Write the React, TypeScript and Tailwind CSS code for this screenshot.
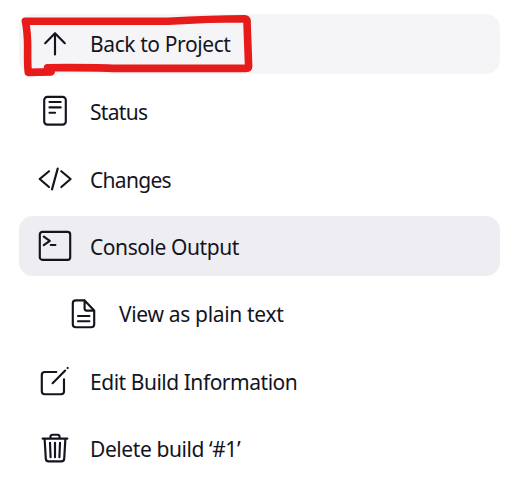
import type { ReactNode } from "react";

type Item = {
  label: string;
  icon: ReactNode;
  row?: string;
  text: string;
};

const items: Item[] = [
  {
    label: "Back to Project",
    row: "bg-[#f5f5f8] pl-[18px]",
    text: "tracking-[-0.4px] pt-px",
    icon: <path d="M18 28.5V7.2M8.2 17.2 18 7.2l9.8 10" />,
  },
  {
    label: "Status",
    text: "tracking-[-0.7px] pt-[2px]",
    icon: (
      <>
        <rect x="7.2" y="3.8" width="21.6" height="27.8" rx="3.2" />
        <path d="M12.5 9h11.2M12.5 14.4h11.2M12.5 19.7h5.6" />
      </>
    ),
  },
  {
    label: "Changes",
    text: "tracking-[-0.7px] pt-[3px]",
    icon: <path d="M12 10.2 2.7 18l9.3 8M24.3 10.2l9.3 7.8-9.3 8M20.7 7.6 15 28.4" />,
  },
  {
    label: "Console Output",
    row: "bg-[#eeedf2] pl-[18px]",
    text: "tracking-[-0.43px] pt-[2px]",
    icon: (
      <>
        <rect x="2.8" y="3.8" width="30.4" height="28" rx="2.6" />
        <path d="m6.8 8.6 6 4.2-6 4.4M13.8 17h4.6" />
      </>
    ),
  },
  {
    label: "View as plain text",
    row: "pl-[47px]",
    text: "tracking-[-0.33px] pt-[2px]",
    icon: (
      <>
        <path d="M18.6 4.4H9.8a3 3 0 0 0-3 3v20.8a3 3 0 0 0 3 3h15.4a3 3 0 0 0 3-3V14.4L18.6 4.4v8.2a2 2 0 0 0 2 2h7.4" />
        <path d="M12 20h11.4M12 25.2h11.4" />
      </>
    ),
  },
  {
    label: "Edit Build Information",
    text: "tracking-[-0.47px] pt-[3px]",
    icon: (
      <>
        <path d="M19.3 9H7.8a3 3 0 0 0-3 3v16.2a3 3 0 0 0 3 3H24a3 3 0 0 0 3-3V16.2" />
        <path d="M15.6 20.2 28.2 7.6M30.6 5.1l.1-.1" />
      </>
    ),
  },
  {
    label: "Delete build ‘#1’",
    text: "tracking-[-0.42px] pt-[2px]",
    icon: (
      <>
        <path d="M5.6 8.6h24.8M13.4 8.6V6.9a2.2 2.2 0 0 1 2.2-2.2h4.8a2.2 2.2 0 0 1 2.2 2.2v1.7M7.6 8.6l1.2 20a2.8 2.8 0 0 0 2.8 2.7h12.8a2.8 2.8 0 0 0 2.8-2.7l1.2-20" />
        <path d="m13 12.8.6 14.4M18 12.8v14.4M23 12.8l-.6 14.4" />
      </>
    ),
  },
];

export default function App() {
  return (
    <main className="relative h-[490px] w-[523px] overflow-hidden bg-white pl-[19px] pt-[14px] font-['Noto_Sans','Open_Sans',sans-serif] text-[#14141f]">
      <nav className="flex w-[481px] flex-col gap-[7.4px]">
        {items.map((item) => (
          <a
            key={item.label}
            className={`flex h-[60px] shrink-0 items-center gap-[17px] rounded-[14px] ${item.row ?? "pl-[18px]"}`}
          >
            <svg
              className="size-9 shrink-0"
              viewBox="0 0 36 36"
              fill="none"
              stroke="currentColor"
              strokeWidth="2.15"
              strokeLinecap="round"
              strokeLinejoin="round"
            >
              {item.icon}
            </svg>
            <span className={`whitespace-nowrap text-[21px] leading-none ${item.text}`}>
              {item.label}
            </span>
          </a>
        ))}
      </nav>
      <svg
        className="pointer-events-none absolute left-0 top-0"
        width="523"
        height="90"
        fill="none"
        stroke="#e81b1b"
        strokeWidth="7.6"
        strokeLinecap="round"
        strokeLinejoin="round"
      >
        <path d="M25.7 21.3H168C190 20 211 18.8 244.5 18.8Q247 18.8 247 21.5L248.6 66Q248.6 68.4 246 68.4H113C105 67.6 100 67.5 47.5 67.7L51 71.9 28.3 72.4C27 62 28 52 27.5 40Q27 29 25.4 21.3" />
      </svg>
    </main>
  );
}
